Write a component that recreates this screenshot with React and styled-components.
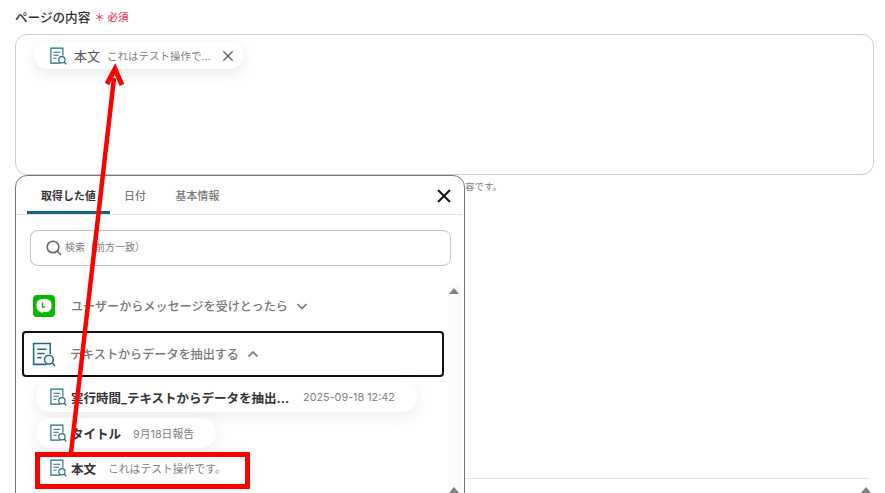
import styled, { createGlobalStyle } from 'styled-components'

const GlobalStyle = createGlobalStyle`
  html, body { margin: 0; padding: 0; background: #fff; overflow: hidden; }
  body { font-family: Inter, "Noto Sans CJK JP", "Noto Sans", sans-serif; }
`

const Page = styled.div`
  position: relative;
  width: 885px;
  height: 493px;
  overflow: hidden;
  padding: 7px 11px 0 15px;
  box-sizing: border-box;
`
const Label = styled.div`
  display: flex;
  align-items: center;
  gap: 4px;
  height: 19px;
  font-size: 12.6px;
  font-weight: 500;
  color: #333;
`
const Required = styled.span`
  font-size: 10.5px;
  font-weight: 500;
  color: #f5405c;
`
const TextArea = styled.div`
  margin-top: 8px;
  height: 141px;
  box-sizing: border-box;
  border: 1px solid #c8d0d8;
  border-radius: 12px;
  padding: 7px 18px;
`
const Chip = styled.div`
  display: inline-flex;
  align-items: center;
  height: 27px;
  width: 209px;
  box-sizing: border-box;
  padding: 0 8px 0 15px;
  border-radius: 14px;
  background: #fff;
  box-shadow: 0 4px 14px rgba(0, 0, 0, 0.09);
`
const ChipName = styled.span`
  margin-left: 7px;
  font-size: 13px;
  color: #555;
`
const ChipValue = styled.span`
  margin-left: 7px;
  flex: 1;
  font-size: 10.5px;
  color: #808080;
  white-space: nowrap;
`
const Hint = styled.div`
  margin-top: 4px;
  font-size: 9.5px;
  color: #808080;
  padding-left: 450px;
`
const NextField = styled.div`
  margin-top: 285px;
  margin-left: 450px;
  margin-right: 5px;
  height: 40px;
  border-top: 1px solid #e4e4e4;
`
const Triangle = styled.div`
  position: absolute;
  width: 0;
  height: 0;
  border-left: 5px solid transparent;
  border-right: 5px solid transparent;
  ${(p) => (p.down ? 'border-top: 6px solid #808080;' : 'border-bottom: 6px solid #808080;')}
`
const PageScrollUp = styled(Triangle)`
  left: 861px;
  top: 487px;
`
const Popup = styled.div`
  position: absolute;
  left: 15px;
  top: 175px;
  width: 450px;
  height: 340px;
  box-sizing: border-box;
  background: #fff;
  border: 1px solid #777;
  border-radius: 12px;
`
const Tabs = styled.div`
  display: flex;
  height: 38px;
  margin-right: 2px;
  padding-left: 11px;
  border-bottom: 1px solid #e2e2e2;
`
const Tab = styled.div`
  display: flex;
  align-items: center;
  justify-content: center;
  box-sizing: border-box;
  height: 38px;
  width: ${(p) => p.width}px;
  font-size: 10.8px;
  letter-spacing: 0.2px;
  font-weight: ${(p) => (p.active ? 700 : 500)};
  color: ${(p) => (p.active ? '#333' : '#777')};
  border-bottom: ${(p) => (p.active ? '3px solid #14667c' : 'none')};
  padding-top: ${(p) => (p.active ? '2px' : '0')};
`
const CloseButton = styled.div`
  position: absolute;
  right: 11px;
  top: 11px;
  width: 18px;
  height: 18px;
  color: #111;
`
const SearchBox = styled.div`
  display: flex;
  align-items: center;
  gap: 2px;
  margin: 15px 13px 0 14px;
  height: 36px;
  box-sizing: border-box;
  padding-left: 14px;
  border: 1px solid #c4c4c4;
  border-radius: 8px;
  font-size: 10px;
  color: #808080;
`
const SearchText = styled.span`
  margin-bottom: 3px;
`
const Tree = styled.div`
  display: flex;
  flex-direction: column;
  margin: 17px 20px 0 6px;
`
const StepRow = styled.div`
  display: flex;
  align-items: center;
  height: 46px;
  box-sizing: border-box;
  margin-top: ${(p) => (p.selected ? '2px' : '0')};
  padding-left: ${(p) => (p.selected ? '7px' : '9px')};
  border: ${(p) => (p.selected ? '2px solid #111' : '2px solid transparent')};
  border-radius: 4px;
  font-size: 12.1px;
  font-weight: 500;
  color: #777;
`
const StepName = styled.span`
  margin-left: ${(p) => p.gap}px;
  margin-right: 8px;
  margin-bottom: 1px;
`
const ValueChip = styled.div`
  display: inline-flex;
  align-items: center;
  align-self: flex-start;
  height: 30px;
  margin: ${(p) => p.top}px 0 0 14px;
  padding: 0 ${(p) => p.right}px 0 13px;
  border-radius: 15px;
  background: #fff;
  box-shadow: 0 4px 16px rgba(0, 0, 0, 0.08);
`
const ValueName = styled.span`
  margin-left: 4px;
  font-size: 12.5px;
  font-weight: 700;
  color: #333;
  white-space: nowrap;
`
const ValueText = styled.span`
  margin-left: ${(p) => p.gap}px;
  font-size: 10.8px;
  color: #808080;
  white-space: nowrap;
`
const ScrollTrack = styled.div`
  position: absolute;
  left: 432px;
  top: 108px;
  width: 13px;
  height: 232px;
  background: #fbfbfb;
`
const ScrollUp = styled(Triangle)`
  left: 1px;
  top: 4px;
`
const ScrollDown = styled(Triangle)`
  left: 1px;
  top: 203px;
`
const HighlightBox = styled.div`
  position: absolute;
  left: 35px;
  top: 452px;
  width: 215px;
  height: 37px;
  box-sizing: border-box;
  border: 5px solid #f00;
`
const ArrowLayer = styled.svg`
  position: absolute;
  left: 0;
  top: 0;
  pointer-events: none;
`

const DocSearchIcon = ({ size = 18 }) => (
  <svg width={size} height={size} viewBox="0 0 24 24" fill="none" stroke="#1d6c83" strokeWidth="1.5" style={{ flexShrink: 0 }}>
    <path d="M15 21.5H2.5V1.5H18.5V11.5" />
    <path d="M6 7H15M6 11H13M6 15H10" />
    <circle cx="17.2" cy="17" r="4.2" />
    <path d="M20.2 20L23 23" />
  </svg>
)

const LineIcon = () => (
  <svg width="22" height="22" viewBox="0 0 22 22" style={{ flexShrink: 0 }}>
    <rect width="22" height="22" rx="4" fill="#06b900" />
    <rect x="3.5" y="4" width="15" height="13" rx="5.5" fill="#fff" />
    <path d="M8 18.5L12 16H9Z" fill="#fff" />
    <path d="M9.5 7.5V12H12" fill="none" stroke="#06b900" strokeWidth="1.4" />
  </svg>
)

const Chevron = ({ up }) => (
  <svg width="12" height="12" viewBox="0 0 12 12" fill="none" stroke="#777" strokeWidth="1.7">
    <path d={up ? 'M1.5 8.5L6 4L10.5 8.5' : 'M1.5 4L6 8.5L10.5 4'} />
  </svg>
)

const Cross = ({ size, width, color }) => (
  <svg width={size} height={size} viewBox="0 0 18 18" fill="none" stroke={color} strokeWidth={width}>
    <path d="M3 3L15 15M15 3L3 15" />
  </svg>
)

function App() {
  return (
    <Page>
      <GlobalStyle />
      <Label>
        ページの内容 <Required>＊ 必須</Required>
      </Label>
      <TextArea>
        <Chip>
          <DocSearchIcon size={18} />
          <ChipName>本文</ChipName>
          <ChipValue>これはテスト操作で...</ChipValue>
          <Cross size={14} width={1.8} color="#666" />
        </Chip>
      </TextArea>
      <Hint>容です。</Hint>
      <NextField />
      <PageScrollUp />

      <Popup>
        <Tabs>
          <Tab active width={83}>取得した値</Tab>
          <Tab width={50}>日付</Tab>
          <Tab width={75}>基本情報</Tab>
        </Tabs>
        <CloseButton>
          <Cross size={18} width={1.9} color="#111" />
        </CloseButton>
        <SearchBox>
          <svg width="18" height="18" viewBox="0 0 18 18" fill="none" stroke="#666" strokeWidth="1.6">
            <circle cx="8" cy="8" r="5.8" />
            <path d="M12.3 12.3L16 16" />
          </svg>
          <SearchText>検索（前方一致）</SearchText>
        </SearchBox>
        <Tree>
          <StepRow>
            <LineIcon />
            <StepName gap={16}>ユーザーからメッセージを受けとったら</StepName>
            <Chevron />
          </StepRow>
          <StepRow selected>
            <DocSearchIcon size={25} />
            <StepName gap={14}>テキストからデータを抽出する</StepName>
            <Chevron up />
          </StepRow>
          <ValueChip top={5} right={22}>
            <DocSearchIcon />
            <ValueName>実行時間_テキストからデータを抽出...</ValueName>
            <ValueText gap={14}>2025-09-18 12:42</ValueText>
          </ValueChip>
          <ValueChip top={6} right={22}>
            <DocSearchIcon />
            <ValueName>タイトル</ValueName>
            <ValueText gap={12}>9月18日報告</ValueText>
          </ValueChip>
          <ValueChip top={5} right={22}>
            <DocSearchIcon />
            <ValueName>本文</ValueName>
            <ValueText gap={12}>これはテスト操作です。</ValueText>
          </ValueChip>
        </Tree>
        <ScrollTrack>
          <ScrollUp />
          <ScrollDown />
        </ScrollTrack>
      </Popup>

      <HighlightBox />
      <ArrowLayer width="885" height="493" viewBox="0 0 885 493">
        <path d="M71 453L114 78" stroke="#f00" strokeWidth="4.5" fill="none" />
        <path d="M107 84L115 69L122 85" stroke="#f00" strokeWidth="5" fill="none" />
      </ArrowLayer>
    </Page>
  )
}

export default App
